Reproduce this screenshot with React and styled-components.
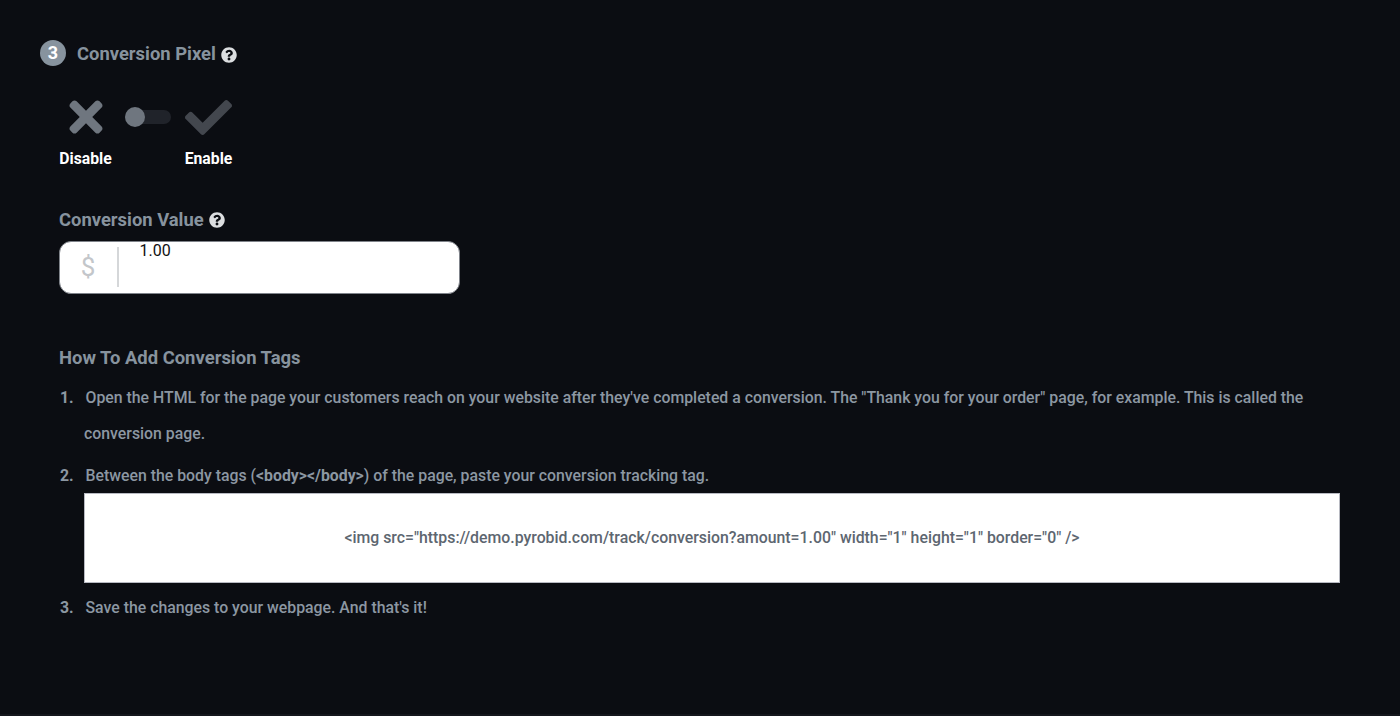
import React from 'react'
import styled, { createGlobalStyle } from 'styled-components'
import { FaCheck, FaQuestionCircle, FaTimes } from 'react-icons/fa'

const GlobalStyle = createGlobalStyle`
    html, body {
        margin: 0;
        padding: 0;
        background-color: #0b0d12;
    }
    body {
        font-family: Roboto, "Liberation Sans", sans-serif;
    }
`
const Page = styled.div`
    box-sizing: border-box;
    width: 1400px;
    height: 716px;
    padding: 40px 60px 0 40px;
    overflow: hidden;
    background-color: #0b0d12;
    border-bottom: 2px solid #14161c;
`
const StepHeader = styled.div`
    display: flex;
    align-items: center;
    height: 26px;
`
const StepBadge = styled.span`
    width: 26px;
    height: 26px;
    border-radius: 50%;
    margin-right: 11px;
    background-color: #87939e;
    color: #ffffff;
    font-size: 18px;
    font-weight: 700;
    line-height: 26px;
    text-align: center;
`
const Title = styled.span`
    margin-top: 1px;
    color: #87939e;
    font-size: 18.4px;
    font-weight: 700;
    line-height: 26px;
`
const HelpIcon = styled(FaQuestionCircle)`
    width: 16px;
    height: 16px;
    margin-left: 5px;
    margin-top: ${(props) => props.$top}px;
    color: #dcdee0;
`
const Body = styled.div`
    padding-left: 19px;
`
const Toggle = styled.div`
    display: grid;
    grid-template-columns: 53px 61px 47px;
    column-gap: 6px;
    justify-items: center;
    width: max-content;
    margin-top: 33px;
`
const ToggleIcon = styled.span`
    display: flex;
    align-items: center;
    justify-content: center;
    height: 36px;
    color: ${(props) => props.color};
    font-size: ${(props) => props.size}px;
`
const Track = styled.span`
    position: relative;
    align-self: center;
    justify-self: start;
    width: 46px;
    margin-left: 7px;
    height: 14px;
    border-radius: 7px;
    background-color: #20232a;
`
const Knob = styled.span`
    position: absolute;
    left: 0;
    top: -3px;
    width: 20px;
    height: 20px;
    border-radius: 50%;
    background-color: #6f767f;
`
const ToggleLabel = styled.span`
    margin-top: 14px;
    color: #ffffff;
    font-size: 15.75px;
    font-weight: 700;
    line-height: 19px;
`
const FieldLabel = styled.div`
    display: flex;
    align-items: center;
    margin-top: 39px;
    color: #87939e;
    font-size: 18.4px;
    font-weight: 700;
    line-height: 26px;
`
const InputBox = styled.div`
    box-sizing: border-box;
    display: flex;
    width: 401px;
    height: 53px;
    margin-top: 8px;
    border: 1px solid #7f838a;
    border-radius: 12px;
    background-color: #ffffff;
`
const Prefix = styled.span`
    box-sizing: border-box;
    width: 59px;
    height: 40px;
    margin-top: 5px;
    padding-right: 1px;
    border-right: 2px solid #d5d7d9;
    color: #c3c6ca;
    font-size: 26px;
    font-weight: 400;
    line-height: 40px;
    text-align: center;
`
const InputValue = styled.span`
    margin-left: 20px;
    padding-left: 0.5px;
    color: #111111;
    font-size: 16px;
    line-height: 18px;
`
const SectionTitle = styled.h3`
    margin: 51px 0 0;
    color: #87939e;
    font-size: 18.45px;
    font-weight: 700;
    line-height: 26px;
`
const Steps = styled.ol`
    list-style: none;
    margin: 0;
    padding: 0;
`
const Step = styled.li`
    position: relative;
    padding-left: 25px;
    margin-top: ${(props) => props.top}px;
    color: #8c97a2;
    font-size: 15.83px;
    font-weight: 500;
    line-height: 36px;
`
const StepText = styled.span`
    margin-left: 1.5px;
`
const StepNumber = styled.b`
    position: absolute;
    left: 1px;
    top: 0;
    font-weight: 700;
`
const CodeBox = styled.div`
    box-sizing: border-box;
    display: flex;
    align-items: center;
    justify-content: center;
    width: 1256px;
    height: 90px;
    margin-top: -1px;
    border: 1px solid #b8bac2;
    background-color: #ffffff;
    color: #5d6670;
    font-size: 15.83px;
    font-weight: 500;
`

const App = () => (
    <Page>
        <GlobalStyle />
        <StepHeader>
            <StepBadge>3</StepBadge>
            <Title>Conversion Pixel</Title>
            <HelpIcon $top={3} />
        </StepHeader>
        <Body>
            <Toggle>
                <ToggleIcon color="#6f767f" size={48}>
                    <FaTimes />
                </ToggleIcon>
                <Track>
                    <Knob />
                </Track>
                <ToggleIcon color="#43474e" size={47}>
                    <FaCheck />
                </ToggleIcon>
                <ToggleLabel>Disable</ToggleLabel>
                <span />
                <ToggleLabel>Enable</ToggleLabel>
            </Toggle>
            <FieldLabel>
                Conversion Value
                <HelpIcon $top={0} />
            </FieldLabel>
            <InputBox>
                <Prefix>$</Prefix>
                <InputValue>1.00</InputValue>
            </InputBox>
            <SectionTitle>How To Add Conversion Tags</SectionTitle>
            <Steps>
                <Step top={9}>
                    <StepNumber>1.</StepNumber>
                    <StepText>
                        Open the HTML for the page your customers reach on your website after they've completed a conversion. The "Thank you for your order" page, for example. This is called the
                    </StepText>
                    <br />
                    conversion page.
                </Step>
                <Step top={6}>
                    <StepNumber>2.</StepNumber>
                    <StepText>
                        Between the body tags (<b>&lt;body&gt;&lt;/body&gt;</b>) of the page, paste your conversion tracking tag.
                    </StepText>
                    <CodeBox>
                        &lt;img src="https://demo.pyrobid.com/track/conversion?amount=1.00" width="1" height="1" border="0" /&gt;
                    </CodeBox>
                </Step>
                <Step top={7}>
                    <StepNumber>3.</StepNumber>
                    <StepText>Save the changes to your webpage. And that's it!</StepText>
                </Step>
            </Steps>
        </Body>
    </Page>
)

export default App
